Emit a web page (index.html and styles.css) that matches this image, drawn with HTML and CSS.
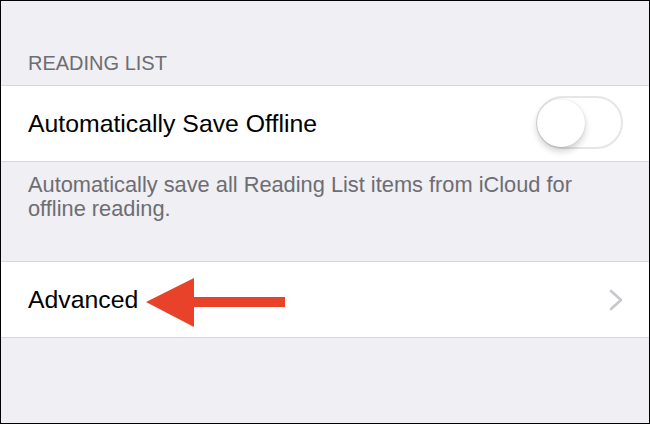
FILE: index.html
```html
<!DOCTYPE html>
<html lang="en">
<head>
<meta charset="utf-8">
<title>Reading List Settings</title>
<link rel="stylesheet" href="styles.css">
</head>
<body>
<div class="screen">
  <div class="section-header">READING LIST</div>
  <div class="group">
    <div class="cell">
      <span class="label">Automatically Save Offline</span>
      <span class="switch"><span class="knob"></span></span>
    </div>
  </div>
  <div class="section-footer">Automatically save all Reading List items from iCloud for offline reading.</div>
  <div class="group">
    <div class="cell cell-link">
      <span class="label">Advanced</span>
      <svg class="annotation-arrow" width="139" height="50" viewBox="0 0 139 50" aria-hidden="true">
        <path d="M0 24 L48 0 L48 19 L139 19 L139 29 L48 29 L48 49 Z" fill="#e8432a"/>
      </svg>
      <svg class="chevron" width="14" height="22" viewBox="0 0 14 22" aria-hidden="true">
        <polyline points="2,2 12,11 2,20" fill="none" stroke="#c7c7cc" stroke-width="2.6" stroke-linecap="round" stroke-linejoin="round"/>
      </svg>
    </div>
  </div>
</div>
</body>
</html>
```
FILE: styles.css
```css
html, body {
  margin: 0;
  padding: 0;
}

body {
  font-family: "Liberation Sans", Arial, sans-serif;
  background: #000;
}

.screen {
  width: 650px;
  height: 424px;
  box-sizing: border-box;
  border: 1px solid #000;
  background: #efeff4;
  display: flex;
  flex-direction: column;
  overflow: hidden;
}

.section-header {
  height: 84px;
  box-sizing: border-box;
  padding: 0 28px 11px 27px;
  display: flex;
  align-items: flex-end;
  font-size: 20px;
  line-height: 22px;
  color: #6d6d72;
}

.group {
  background: #fff;
  border-top: 1px solid #d6d6da;
  border-bottom: 1px solid #d6d6da;
}

.cell {
  position: relative;
  height: 75px;
  box-sizing: border-box;
  padding: 0 26px 0 27px;
  display: flex;
  align-items: center;
  justify-content: space-between;
}

.label {
  font-size: 24.8px;
  color: #000;
}

.switch {
  width: 87px;
  height: 53px;
  box-sizing: border-box;
  border: 2.5px solid #e5e5ea;
  border-radius: 27px;
  background: #fff;
  position: relative;
  display: flex;
  align-items: center;
  margin-top: -2px;
}

.knob {
  width: 48px;
  height: 48px;
  border-radius: 50%;
  background: #fff;
  margin-left: -1px;
  box-shadow: 0 4px 7px rgba(0, 0, 0, 0.2), 0 0 0 0.5px rgba(0, 0, 0, 0.08);
}

.section-footer {
  height: 99px;
  box-sizing: border-box;
  padding: 11px 28px 0 27px;
  font-size: 21.8px;
  line-height: 24px;
  color: #6d6d72;
}

.annotation-arrow {
  position: absolute;
  left: 145px;
  top: 16px;
}
```
